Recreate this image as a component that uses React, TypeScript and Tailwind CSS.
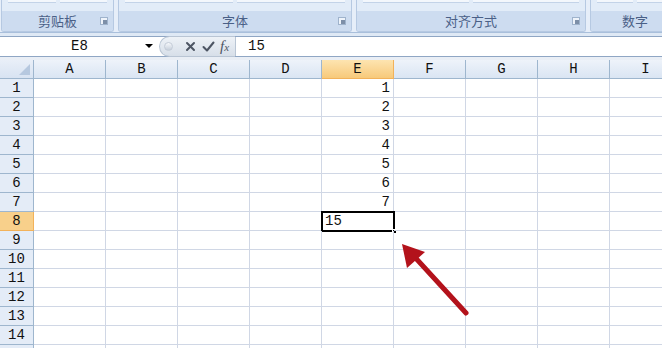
import React from "react"

const cols = ["A", "B", "C", "D", "E", "F", "G", "H", "I"]
const rows = Array.from({ length: 15 }, (_, i) => i + 1)

const values: Record<number, string> = { 1: "1", 2: "2", 3: "3", 4: "4", 5: "5", 6: "6", 7: "7" }

function Launcher() {
    return (
        <span className="absolute right-[5px] top-[6px] w-[8px] h-[8px] border border-[#9fb3cc] bg-[#eef3fa] flex items-end justify-end">
            <span className="w-[4px] h-[4px] bg-[#7d8fa8]" />
        </span>
    )
}

function Group({ label, width, launcher = true }: { label: string; width: string; launcher?: boolean }) {
    return (
        <div className={`${width} shrink-0 h-full flex flex-col border border-t-0 border-[#b6c9e2] rounded-b-[3px] bg-[#dbe7f6] overflow-hidden`}>
            <div className="h-[11px] bg-[#e2ecf8] flex gap-[4px] px-[6px]">
                <div className="flex-1 h-[3px] bg-[#f3f7fc] border-b border-[#c3d3e8]" />
                <div className="flex-1 h-[3px] bg-[#f3f7fc] border-b border-[#c3d3e8]" />
            </div>
            <div className="relative flex-1 bg-[#cddcf0] flex items-center justify-center text-[13px] text-[#4a6087] [font-family:'Noto_Sans_CJK_SC',sans-serif]">
                {label}
                {launcher && <Launcher />}
            </div>
        </div>
    )
}

export default function App() {
    return (
        <div className="w-[662px] h-[348px] overflow-hidden bg-white flex flex-col [font-family:'Liberation_Mono',monospace]">
            {/* ribbon */}
            <div className="h-[33px] shrink-0 flex gap-[4px] bg-[#e6eef9] pl-[1px] border-b border-[#a9bfdb]">
                <Group label="剪贴板" width="w-[113px]" />
                <Group label="字体" width="w-[234px]" />
                <Group label="对齐方式" width="w-[230px]" />
                <Group label="数字" width="w-[90px]" launcher={false} />
            </div>
            <div className="h-[3px] shrink-0 bg-[#dfe9f5]" />

            {/* formula bar */}
            <div className="h-[21px] shrink-0 flex items-stretch bg-white border-y border-[#8fa6c4]">
                <div className="w-[159px] shrink-0 relative flex items-center justify-center text-[14px] text-[#111]">
                    E8
                    <span className="absolute right-[6px] top-[7px] w-0 h-0 border-x-[4px] border-x-transparent border-t-[4px] border-t-black" />
                </div>
                <div className="w-[76px] shrink-0 flex items-center rounded-l-full bg-gradient-to-b from-[#eef2f7] to-[#d7dfe9] border border-[#b9c5d4] border-r-0 my-[-1px]">
                    <span className="ml-[4px] w-[9px] h-[9px] rounded-full bg-gradient-to-b from-[#f6f8fb] to-[#c6cfdb] border border-[#c4ccd8]" />
                    <svg width="11" height="11" viewBox="0 0 11 11" className="ml-[12px]">
                        <path d="M2 2 L9 9 M9 2 L2 9" stroke="#4d5563" strokeWidth="2" strokeLinecap="round" />
                    </svg>
                    <svg width="13" height="11" viewBox="0 0 13 11" className="ml-[6px]">
                        <path d="M1.5 6 L5 9.5 L11.5 1.5" stroke="#4d5563" strokeWidth="2" fill="none" strokeLinecap="round" strokeLinejoin="round" />
                    </svg>
                    <span className="ml-[5px] text-[15px] italic text-[#4d5563] [font-family:'Liberation_Serif',serif] leading-none">
                        f<span className="text-[11px]">x</span>
                    </span>
                </div>
                <div className="flex-1 flex items-center pl-[12px] text-[14px] text-[#111] border-l border-[#b9c5d4]">15</div>
            </div>
            <div className="h-[3px] shrink-0 bg-[#e9eef5]" />

            {/* grid */}
            <div className="relative flex-1 overflow-hidden">
                <div className="grid grid-cols-[34px_repeat(9,72px)] auto-rows-[19px] text-[14px] text-[#111]">
                    <div className="relative bg-gradient-to-b from-[#e9eff8] to-[#d8e3f2] border-r border-b border-[#9eb6ce]">
                        <span className="absolute right-[3px] bottom-[3px] w-0 h-0 border-l-[11px] border-l-transparent border-b-[11px] border-b-[#b6c8df]" />
                    </div>
                    {cols.map((c) => (
                        <div
                            key={c}
                            className={
                                c === "E"
                                    ? "flex items-center justify-center bg-gradient-to-b from-[#fde4b0] to-[#f7c97a] border-r border-b border-[#f2b25a]"
                                    : "flex items-center justify-center bg-gradient-to-b from-[#eef3fa] to-[#dae5f3] border-r border-b border-[#9eb6ce]"
                            }
                        >
                            {c}
                        </div>
                    ))}
                    {rows.map((r) => (
                        <React.Fragment key={r}>
                            <div
                                className={
                                    r === 8
                                        ? "flex items-center justify-center bg-[#f8d08b] border-r border-b border-[#f2b25a]"
                                        : "flex items-center justify-center bg-[#e4ecf7] border-r border-b border-[#9eb6ce]"
                                }
                            >
                                {r < 15 ? r : ""}
                            </div>
                            {cols.map((c) => (
                                <div key={c} className="relative flex items-center justify-end pr-[3px] border-r border-b border-[#d0d7e5]">
                                    {c === "E" && values[r]}
                                    {c === "E" && r === 8 && (
                                        <div className="absolute -left-px -top-px w-[74px] h-[21px] border-2 border-black flex items-center pl-[2px]">
                                            <span>15</span>
                                            <span className="absolute -right-[4px] -bottom-[4px] w-[5px] h-[5px] bg-black border border-white" />
                                        </div>
                                    )}
                                </div>
                            ))}
                        </React.Fragment>
                    ))}
                </div>

                {/* red arrow */}
                <svg className="absolute left-0 top-0" width="662" height="290" viewBox="0 60 662 290">
                    <path d="M466 313 L412 254" stroke="#b3121b" strokeWidth="5" strokeLinecap="round" />
                    <path d="M402 244 L425 252 L407 268 Z" fill="#b3121b" />
                </svg>
            </div>
        </div>
    )
}
